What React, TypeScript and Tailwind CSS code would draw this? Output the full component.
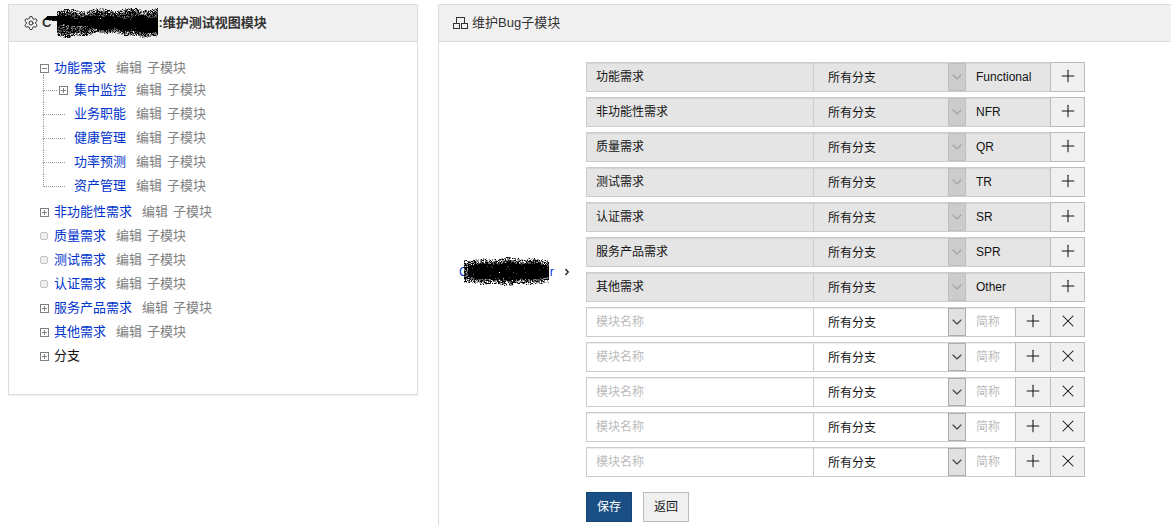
import React, { useState } from 'react';
import { ChevronDown, ChevronRight, Plus, Settings, X } from 'lucide-react';

interface TreeNode {
  name: string;
  state: 'open' | 'closed' | 'leaf';
  plain?: boolean; // no link and no actions
  children?: TreeNode[];
}

interface ModuleRow {
  name: string;
  short: string;
  locked: boolean;
}

const tree: TreeNode[] = [
  {
    name: '功能需求',
    state: 'open',
    children: [
      { name: '集中监控', state: 'closed' },
      { name: '业务职能', state: 'leaf' },
      { name: '健康管理', state: 'leaf' },
      { name: '功率预测', state: 'leaf' },
      { name: '资产管理', state: 'leaf' },
    ],
  },
  { name: '非功能性需求', state: 'closed' },
  { name: '质量需求', state: 'leaf' },
  { name: '测试需求', state: 'leaf' },
  { name: '认证需求', state: 'leaf' },
  { name: '服务产品需求', state: 'closed' },
  { name: '其他需求', state: 'closed' },
  { name: '分支', state: 'closed', plain: true },
];

const emptyRow: ModuleRow = { name: '', short: '', locked: false };

const initialRows: ModuleRow[] = [
  { name: '功能需求', short: 'Functional', locked: true },
  { name: '非功能性需求', short: 'NFR', locked: true },
  { name: '质量需求', short: 'QR', locked: true },
  { name: '测试需求', short: 'TR', locked: true },
  { name: '认证需求', short: 'SR', locked: true },
  { name: '服务产品需求', short: 'SPR', locked: true },
  { name: '其他需求', short: 'Other', locked: true },
  emptyRow,
  emptyRow,
  emptyRow,
  emptyRow,
  emptyRow,
];

type Density = (x: number, y: number) => number;

// One square per inked pixel, picked by the density at that pixel
const inkPath = (width: number, height: number, start: number, density: Density) => {
  let seed = start;
  let d = '';
  for (let y = 0; y < height; y++) {
    for (let x = 0; x < width; x++) {
      seed = (seed * 16807) % 2147483647;
      if (seed / 2147483647 < density(x, y)) d += `M${x} ${y}h1v1h-1z`;
    }
  }
  return d;
};

const titleDensity: Density = (x, y) => {
  if (x < 13) return y >= 9 && y <= 12 + x / 8 && y >= 12 - x ? 1 : 0;
  const top = 3 + Math.sin(x / 5) * 1.5 - x / 60;
  const bottom = 28 + Math.sin(x / 13) * 2 + Math.sin(x / 3);
  if (y < top || y > bottom) return 0;
  const middle = 12 + Math.min(x / 18, 5) + Math.sin(x / 4);
  const half = 3 + Math.min(x / 20, 4) + Math.sin(x / 7);
  const away = Math.abs(y - middle) - half;
  if (away <= 0) return 0.99;
  const edge = Math.min(y - top, bottom - y);
  return Math.min(0.2 + edge * 0.14, 0.88);
};

const linkDensity: Density = (x, y) => {
  const bend = Math.abs(x - 45) / 22 + Math.sin(x / 4) * 0.7;
  const edge = Math.min(y - bend, 28 - y - bend);
  if (edge < 0) return 0;
  if (edge < 6) return 0.15 + edge * 0.13;
  return x < 4 ? 0.7 : 0.985;
};

const Ink: React.FC<{ density: Density; width: number; height: number; className?: string }> = ({ density, width, height, className }) => (
  <svg width={width} height={height} viewBox={`0 0 ${width} ${height}`} shapeRendering="crispEdges" className={className} aria-hidden="true">
    <path d={inkPath(width, height, 31, density)} fill="#000" fillOpacity=".35" />
    <path d={inkPath(width, height, 5231, density)} fill="#000" fillOpacity=".5" />
    <path d={inkPath(width, height, 97, (x, y) => (density(x, y) > 0.9 ? density(x, y) : density(x, y) * 0.6))} fill="#000" />
  </svg>
);

const SitemapIcon = () => (
  <svg width="15" height="12" viewBox="0 0 15 12" fill="none" stroke="#333" shapeRendering="crispEdges" aria-hidden="true">
    <path d="M3.5 6V.5h8V6M.5 6.5h6v5h-6zM8.5 6.5h6v5h-6z" />
  </svg>
);

const Toggle: React.FC<{ state: TreeNode['state'] }> = ({ state }) => {
  if (state === 'leaf') {
    return <span className="mr-px h-2 w-2 shrink-0 rounded-xs border border-[#c4c4c4] bg-[#eee]" />;
  }
  return (
    <button type="button" aria-label={state === 'open' ? '收起' : '展开'} className="block shrink-0">
      <svg width="9" height="9" viewBox="0 0 9 9" fill="none" stroke="#808080" shapeRendering="crispEdges">
        <rect x=".5" y=".5" width="8" height="8" />
        <path d={state === 'open' ? 'M2 4.5h5' : 'M2 4.5h5M4.5 2v5'} />
      </svg>
    </button>
  );
};

const NodeLabel: React.FC<{ node: TreeNode }> = ({ node }) => {
  if (node.plain) return <span>{node.name}</span>;
  return (
    <span className="flex items-center">
      <a href="#module" className="text-[#03c]">{node.name}</a>
      <a href="#edit" className="ml-2.5 text-[#808080]">编辑</a>
      <a href="#sub" className="ml-[5px] text-[#808080]">子模块</a>
    </span>
  );
};

const ChildNode: React.FC<{ node: TreeNode; last: boolean }> = ({ node, last }) => (
  <li className="flex h-6 items-center">
    <span className={`flex h-full flex-col ${node.state === 'leaf' ? 'mr-[9px] w-[22px]' : 'mr-0.5 w-3.5'}`}>
      <span className="h-[13px] border-b border-l border-dotted border-[#999]" />
      {!last && <span className="flex-1 border-l border-dotted border-[#999]" />}
    </span>
    {node.state !== 'leaf' && <span className="mr-1.5"><Toggle state={node.state} /></span>}
    <NodeLabel node={node} />
  </li>
);

const ModuleTree = () => (
  <ul className="text-[13px] leading-5">
    {tree.map(node => (
      <li key={node.name}>
        <div className={`flex items-center gap-[5px] ${node.children ? 'h-5' : 'h-6'}`}>
          <Toggle state={node.state} />
          <NodeLabel node={node} />
        </div>
        {node.children && (
          <>
            <div className="-mt-1 ml-[3px] h-1 border-l border-dotted border-[#999]" />
            <ul className="ml-[3px] pb-0.5">
              {node.children.map((child, i) => (
                <ChildNode key={child.name} node={child} last={i === node.children!.length - 1} />
              ))}
            </ul>
          </>
        )}
      </li>
    ))}
  </ul>
);

const IconButton: React.FC<{ label: string; joined?: boolean; onClick: () => void; children: React.ReactNode }> = ({ label, joined, onClick, children }) => (
  <button
    type="button"
    aria-label={label}
    onClick={onClick}
    className={`flex h-full w-[35px] items-center justify-center border border-[#bbb] bg-[#f0f0f0] pb-0.5 text-[#141414] hover:bg-[#e5e5e5] ${joined ? 'border-r-0' : ''}`}
  >
    {children}
  </button>
);

const Field: React.FC<{ row: ModuleRow; onAdd: () => void; onRemove: () => void }> = ({ row, onAdd, onRemove }) => {
  const tone = row.locked ? 'bg-[#e5e5e5]' : 'bg-white';
  return (
    <div className="flex h-[30px]">
      <input
        aria-label="模块名称"
        placeholder="模块名称"
        defaultValue={row.name}
        disabled={row.locked}
        className={`w-[228px] border border-[#ccc] px-[9px] shadow-[inset_0_1px_1px_rgba(0,0,0,0.075)] outline-none placeholder:text-[#bbb] ${tone}`}
      />
      <div className="relative w-[152px]">
        <select
          aria-label="分支"
          disabled={row.locked}
          className={`h-full w-full appearance-none border-y border-[#ccc] pt-0.5 pl-3.5 opacity-100 shadow-[inset_0_1px_1px_rgba(0,0,0,0.075)] outline-none ${tone}`}
        >
          <option>所有分支</option>
        </select>
        <span
          className={`pointer-events-none absolute inset-y-0 right-0 my-px flex w-[18px] items-center justify-center border ${row.locked ? 'border-[#bfbfbf] bg-[#ccc] text-[#a3a3a3]' : 'border-[#adadad] bg-[#e1e1e1] text-[#444]'}`}
        >
          <ChevronDown size={16} strokeWidth={1.75} className="shrink-0" />
        </span>
      </div>
      <input
        aria-label="简称"
        placeholder="简称"
        defaultValue={row.short}
        disabled={row.locked}
        className={`min-w-0 flex-1 border-y border-[#ccc] pr-1 pl-2.5 shadow-[inset_0_1px_1px_rgba(0,0,0,0.075)] outline-none placeholder:text-[#bbb] ${tone}`}
      />
      <IconButton label="添加" joined={!row.locked} onClick={onAdd}>
        <Plus size={20} strokeWidth={1.25} />
      </IconButton>
      {!row.locked && (
        <IconButton label="删除" onClick={onRemove}>
          <X size={20} strokeWidth={1.25} />
        </IconButton>
      )}
    </div>
  );
};

const Panel: React.FC<{ title: React.ReactNode; className: string; children: React.ReactNode }> = ({ title, className, children }) => (
  <section className={`border-[#ddd] bg-white ${className}`}>
    <h2 className="flex h-[37px] items-center border-b border-[#ddd] bg-[#f0f0f0] px-3.5 text-[13px] text-[#333]">{title}</h2>
    {children}
  </section>
);

const App: React.FC = () => {
  const [rows, setRows] = useState(initialRows.map((row, id) => ({ ...row, id })));

  const addRow = (index: number) => {
    setRows([...rows.slice(0, index + 1), { ...emptyRow, id: Date.now() }, ...rows.slice(index + 1)]);
  };

  const removeRow = (id: number) => {
    setRows(rows.filter(row => row.id !== id));
  };

  return (
    <main className="flex min-h-screen items-stretch gap-5 bg-white pt-1 pl-2 font-['Liberation_Sans','Noto_Sans_CJK_SC',sans-serif] text-[12px] text-[#141414]">
      <Panel
        className="w-[410px] shrink-0 self-start border shadow-[0_1px_1px_rgba(0,0,0,0.05)]"
        title={
          <>
            <Settings size={16} strokeWidth={1.5} className="mr-[3px]" />
            <span className="flex items-center font-bold">
              C
              <Ink density={titleDensity} width={114} height={32} className="-ml-[7px]" />
              :维护测试视图模块
            </span>
          </>
        }
      >
        <div className="pt-4 pr-[30px] pb-[26px] pl-[31px]">
          <ModuleTree />
        </div>
      </Panel>

      <Panel
        className="min-w-0 flex-1 border-t border-l"
        title={
          <>
            <SitemapIcon />
            <span className="ml-1">维护Bug子模块</span>
          </>
        }
      >
        <form className="grid grid-cols-[127px_499px] gap-y-[15px] pt-5 pl-5" onSubmit={e => e.preventDefault()}>
          <div className="flex items-center pt-1">
            <a href="#product" className="flex items-center text-[#03c]">
              C
              <Ink density={linkDensity} width={85} height={30} className="-ml-1" />
              <span className="ml-px">r</span>
            </a>
            <ChevronRight size={10} strokeWidth={3} className="ml-2" />
          </div>
          <div className="flex flex-col gap-[5px]">
            {rows.map((row, i) => (
              <Field key={row.id} row={row} onAdd={() => addRow(i)} onRemove={() => removeRow(row.id)} />
            ))}
          </div>
          <div className="col-start-2 flex gap-[11px]">
            <button type="submit" className="h-[30px] w-[46px] border border-[#164472] bg-[#1a4f85] text-white">保存</button>
            <button type="button" className="h-[30px] w-[46px] border border-[#bbb] bg-[#f0f0f0]">返回</button>
          </div>
        </form>
      </Panel>
    </main>
  );
};

export default App;
